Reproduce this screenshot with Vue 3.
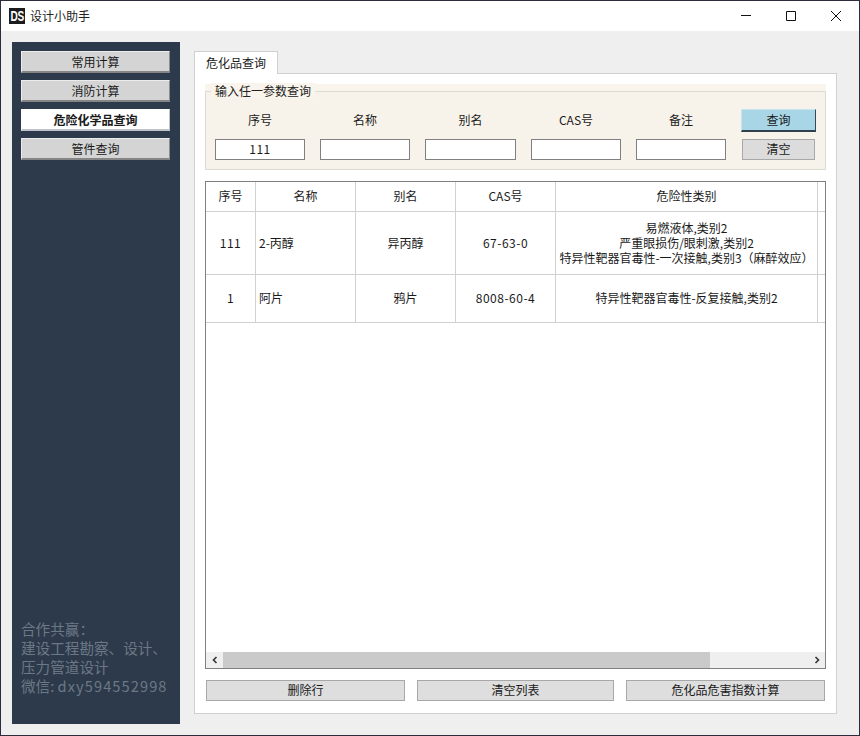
<script setup>
const navItems = [
  { label: '常用计算', active: false },
  { label: '消防计算', active: false },
  { label: '危险化学品查询', active: true },
  { label: '管件查询', active: false }
]
const fields = [
  { label: '序号', value: '111', w: 90 },
  { label: '名称', value: '', w: 90 },
  { label: '别名', value: '', w: 91 },
  { label: 'CAS号', value: '', w: 90 },
  { label: '备注', value: '', w: 90 }
]
const headers = ['序号', '名称', '别名', 'CAS号', '危险性类别', '']
const rows = [
  { no: '111', name: '2-丙醇', alias: '异丙醇', cas: '67-63-0', h: 63,
    hazard: ['易燃液体,类别2', '严重眼损伤/眼刺激,类别2', '特异性靶器官毒性-一次接触,类别3（麻醉效应）'] },
  { no: '1', name: '阿片', alias: '鸦片', cas: '8008-60-4', h: 48,
    hazard: ['特异性靶器官毒性-反复接触,类别2'] }
]
</script>

<template>
  <div class="window">
    <header class="titlebar">
      <span class="logo"><span class="logo-text">DS</span></span>
      <span class="title">设计小助手</span>
      <div class="controls">
        <svg width="12" height="12" viewBox="0 0 12 12"><path d="M1 5.5H11" /></svg>
        <svg width="12" height="12" viewBox="0 0 12 12"><path d="M1.5 1.5H10.5V10.5H1.5Z" /></svg>
        <svg width="12" height="12" viewBox="0 0 12 12"><path d="M1 1L11 11M11 1L1 11" /></svg>
      </div>
    </header>

    <div class="body">
      <aside class="sidebar">
        <nav class="nav">
          <button v-for="item in navItems" :key="item.label" class="nav-btn" :class="{ active: item.active }">{{ item.label }}</button>
        </nav>
        <div class="promo">
          <div>合作共赢：</div>
          <div>建设工程勘察、设计、</div>
          <div>压力管道设计</div>
          <div>微信: <span class="wechat">dxy594552998</span></div>
        </div>
      </aside>

      <main class="main">
        <div class="tabs"><div class="tab">危化品查询</div></div>
        <section class="pane">
          <div class="group">
            <div class="group-box">
              <span class="legend">输入任一参数查询</span>
              <div class="group-row">
                <div class="fields">
                  <div v-for="f in fields" :key="f.label" class="field" :style="{ width: f.w + 'px' }">
                    <label class="field-label">{{ f.label }}</label>
                    <input class="field-input" :value="f.value" />
                  </div>
                </div>
                <div class="actions">
                  <button class="btn-query">查询</button>
                  <button class="btn-clear">清空</button>
                </div>
              </div>
            </div>
          </div>

          <div class="table-box">
            <div class="table-scroll">
              <table class="grid">
                <colgroup>
                  <col style="width:50px" /><col style="width:100px" /><col style="width:100px" />
                  <col style="width:100px" /><col style="width:262px" /><col style="width:40px" />
                </colgroup>
                <thead>
                  <tr class="head-row"><th v-for="(h, i) in headers" :key="i">{{ h }}</th></tr>
                </thead>
                <tbody>
                  <tr v-for="r in rows" :key="r.no" :style="{ height: r.h + 'px' }">
                    <td class="num">{{ r.no }}</td>
                    <td class="left">{{ r.name }}</td>
                    <td>{{ r.alias }}</td>
                    <td class="num">{{ r.cas }}</td>
                    <td><div v-for="line in r.hazard" :key="line" class="hz">{{ line }}</div></td>
                    <td></td>
                  </tr>
                </tbody>
              </table>
            </div>
            <div class="hscroll">
              <span class="arrow">
                <svg width="8" height="8" viewBox="0 0 8 8"><path d="M5.5 1L2.5 4L5.5 7" /></svg>
              </span>
              <span class="thumb"></span>
              <span class="arrow end">
                <svg width="8" height="8" viewBox="0 0 8 8"><path d="M2.5 1L5.5 4L2.5 7" /></svg>
              </span>
            </div>
          </div>

          <div class="bottom-actions">
            <button class="btn-bottom b1">删除行</button>
            <button class="btn-bottom b2">清空列表</button>
            <button class="btn-bottom b3">危化品危害指数计算</button>
          </div>
        </section>
      </main>
    </div>
  </div>
</template>

<style>
html, body { margin: 0; padding: 0; background: #efefef; }
</style>

<style scoped>
* { box-sizing: border-box; }
.window {
  width: 860px;
  height: 736px;
  border: 1px solid #2b2d3d;
  display: flex;
  flex-direction: column;
  background: #efefef;
  font-family: "Noto Sans CJK SC", "Liberation Sans", sans-serif;
  font-size: 12px;
  color: #1a1a1a;
  overflow: hidden;
}
.titlebar {
  height: 30px;
  flex: none;
  background: #fff;
  display: flex;
  align-items: center;
  padding-left: 8px;
}
.logo {
  width: 16px;
  height: 16px;
  flex: none;
  background: #1c1c1c;
  display: flex;
  align-items: center;
  justify-content: center;
  overflow: hidden;
}
.logo-text {
  color: #fff;
  font: bold 14px/16px "Liberation Sans", sans-serif;
  letter-spacing: -0.5px;
  transform: scaleX(0.72);
}
.title { color: #222; margin-left: 5px; margin-top: -2px; }
.controls {
  margin-left: auto;
  margin-right: 17px;
  display: flex;
  gap: 33px;
  align-items: center;
}
.controls svg { fill: none; stroke: #111; stroke-width: 1; }
.body {
  flex: 1;
  min-height: 0;
  display: flex;
  padding: 11px 22px 11px 11px;
}
.sidebar {
  width: 168px;
  flex: none;
  background: #2c3a4b;
  display: flex;
  flex-direction: column;
  padding: 9px 10px 29px 9px;
}
.nav { display: flex; flex-direction: column; gap: 7px; }
button {
  font-family: inherit;
  font-size: 12px;
  color: #1a1a1a;
  padding: 0;
  border-radius: 0;
  cursor: default;
}
.nav-btn {
  height: 22px;
  background: #d4d4d4;
  border: 1px solid #ececec;
  border-right-color: #8c8c8c;
  border-bottom: 2px solid #858585;
  line-height: 1;
}
.nav-btn.active {
  background: #fff;
  border-color: #fff;
  border-bottom-color: #c0c4ca;
  border-right-color: #c0c4ca;
  font-weight: 700;
}
.promo {
  margin-top: auto;
  color: #6c7885;
  font-size: 14.6px;
  line-height: 19px;
  white-space: nowrap;
}
.wechat { letter-spacing: 1.1px; }
.main {
  flex: 1;
  min-width: 0;
  margin-left: 14px;
  padding: 9px 0 10px;
  display: flex;
  flex-direction: column;
}
.tabs { display: flex; height: 22px; flex: none; position: relative; z-index: 1; }
.tab {
  width: 84px;
  height: 23px;
  background: #fff;
  border: 1px solid #d0d0d0;
  border-bottom: none;
  padding-bottom: 2px;
  display: flex;
  align-items: center;
  justify-content: center;
}
.pane {
  flex: 1;
  min-height: 0;
  background: #fff;
  border: 1px solid #d0d0d0;
  padding: 10px 10px 12px 10px;
  display: flex;
  flex-direction: column;
}
.group {
  height: 86px;
  flex: none;
  background: #f9f5ec;
  padding-top: 7px;
}
.group-box {
  position: relative;
  height: 79px;
  border: 1px solid #dcdcd4;
  background: #f8f3ea;
  padding: 0 9px 0 9px;
}
.legend {
  position: absolute;
  left: 5px;
  top: -9px;
  padding: 0 4px;
  line-height: 15px;
  background: #f9f5ec;
  color: #222;
}
.group-row {
  display: flex;
  align-items: flex-start;
  padding-top: 16px;
}
.fields { display: flex; gap: 15px; }
.field { display: flex; flex-direction: column; align-items: stretch; }
.field-label { height: 24px; line-height: 24px; text-align: center; margin-bottom: 7px; }
.field-input {
  height: 21px;
  width: 100%;
  border: 1px solid #808080;
  background: #fff;
  text-align: center;
  font-family: inherit;
  font-size: 12px;
  letter-spacing: 0.5px;
  color: #1a1a1a;
  padding: 0 0 2px;
  outline: none;
  border-radius: 0;
}
.actions {
  margin: 1px 0 0 15px;
  display: flex;
  flex-direction: column;
  align-items: center;
  width: 75px;
}
.btn-query {
  width: 75px;
  height: 23px;
  background: #a9d6e6;
  border: 1px solid #c8e4ee;
  border-right: 1px solid #3a4a55;
  border-bottom: 2px solid #2f3f4c;
  margin-bottom: 7px;
  padding-bottom: 1px;
}
.btn-clear {
  width: 73px;
  height: 21px;
  background: #dcdcdc;
  border: 1px solid #a8a8a8;
  padding-bottom: 2px;
}
.table-box {
  flex: 1;
  min-height: 0;
  margin-top: 11px;
  border: 1px solid #808080;
  display: flex;
  flex-direction: column;
  background: #fff;
}
.table-scroll { flex: 1; min-height: 0; overflow: hidden; }
.grid {
  border-collapse: separate;
  border-spacing: 0;
  table-layout: fixed;
  width: 652px;
}
.grid th, .grid td {
  border-right: 1px solid #d0d0d0;
  border-bottom: 1px solid #d0d0d0;
  padding: 0 0 2px;
  text-align: center;
  font-weight: 400;
  vertical-align: middle;
  color: #1a1a1a;
}
.grid td.num { letter-spacing: 0.5px; }
.grid td.left { text-align: left; padding-left: 3px; }
.head-row { height: 30px; }
.hz { line-height: 15px; white-space: nowrap; }
.hscroll {
  height: 16px;
  flex: none;
  background: #efefef;
  display: flex;
  align-items: stretch;
}
.arrow {
  width: 17px;
  flex: none;
  display: flex;
  align-items: center;
  justify-content: center;
}
.arrow svg { fill: none; stroke: #333; stroke-width: 1.6; }
.thumb { width: 487px; flex: none; background: #cacaca; }
.arrow.end { margin-left: auto; }
.bottom-actions {
  flex: none;
  margin-top: 11px;
  padding-left: 1px;
  display: flex;
}
.btn-bottom {
  height: 21px;
  background: #dedede;
  border: 1px solid #a8a8a8;
  padding-bottom: 2px;
}
.b1 { width: 199px; }
.b2 { width: 197px; margin-left: 12px; }
.b3 { width: 199px; margin-left: 12px; }
</style>
